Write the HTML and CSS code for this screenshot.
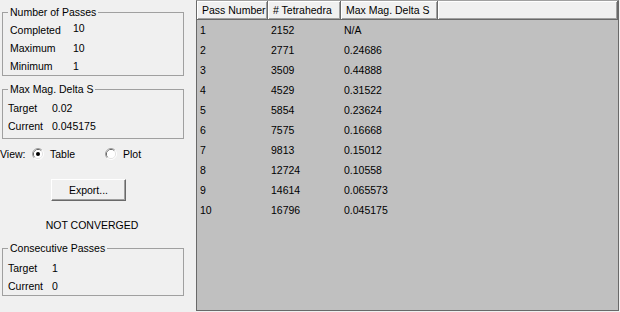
FILE: index.html
```html
<!DOCTYPE html>
<html lang="en">
  <head>
    <meta charset="UTF-8" />
    <title>Adaptive Passes</title>
    <link rel="stylesheet" href="styles.css">
  </head>
  <body>
    <div class="window">
      <div class="side">
        <fieldset class="group passes">
          <legend>Number of Passes</legend>
          <div class="fields wide">
            <span>Completed</span><span class="raised">10</span>
            <span>Maximum</span><span>10</span>
            <span>Minimum</span><span>1</span>
          </div>
        </fieldset>

        <fieldset class="group delta">
          <legend>Max Mag. Delta S</legend>
          <div class="fields">
            <span>Target</span><span>0.02</span>
            <span>Current</span><span>0.045175</span>
          </div>
        </fieldset>

        <div class="view">
          <span class="view-label">View:</span>
          <label class="option table-opt">
            <svg class="radio" width="12" height="12" viewBox="0 0 12 12">
              <path d="M2.11 9.89A5.5 5.5 0 0 1 9.89 2.11" fill="none" stroke="#a0a0a0" />
              <path d="M9.89 2.11A5.5 5.5 0 0 1 2.11 9.89" fill="none" stroke="#ffffff" />
              <path d="M2.82 9.18A4.5 4.5 0 0 1 9.18 2.82" fill="none" stroke="#696969" />
              <path d="M9.18 2.82A4.5 4.5 0 0 1 2.82 9.18" fill="none" stroke="#e3e3e3" />
              <circle cx="6" cy="6" r="4" fill="#fff" />
              <circle cx="6" cy="6" r="2" fill="#000" />
            </svg>
            Table
          </label>
          <label class="option">
            <svg class="radio" width="12" height="12" viewBox="0 0 12 12">
              <path d="M2.11 9.89A5.5 5.5 0 0 1 9.89 2.11" fill="none" stroke="#a0a0a0" />
              <path d="M9.89 2.11A5.5 5.5 0 0 1 2.11 9.89" fill="none" stroke="#ffffff" />
              <path d="M2.82 9.18A4.5 4.5 0 0 1 9.18 2.82" fill="none" stroke="#696969" />
              <path d="M9.18 2.82A4.5 4.5 0 0 1 2.82 9.18" fill="none" stroke="#e3e3e3" />
              <circle cx="6" cy="6" r="4" fill="#fff" />
            </svg>
            Plot
          </label>
        </div>

        <button class="export">Export...</button>

        <div class="status">NOT CONVERGED</div>

        <fieldset class="group consecutive">
          <legend>Consecutive Passes</legend>
          <div class="fields">
            <span>Target</span><span>1</span>
            <span>Current</span><span>0</span>
          </div>
        </fieldset>
      </div>

      <div class="grid-panel">
        <table>
          <colgroup>
            <col class="c1" /><col class="c2" /><col class="c3" /><col />
          </colgroup>
          <thead>
            <tr>
              <th>Pass Number</th>
              <th># Tetrahedra</th>
              <th>Max Mag. Delta S</th>
              <th></th>
            </tr>
          </thead>
          <tbody>
            <tr><td>1</td><td>2152</td><td>N/A</td><td></td></tr>
            <tr><td>2</td><td>2771</td><td>0.24686</td><td></td></tr>
            <tr><td>3</td><td>3509</td><td>0.44888</td><td></td></tr>
            <tr><td>4</td><td>4529</td><td>0.31522</td><td></td></tr>
            <tr><td>5</td><td>5854</td><td>0.23624</td><td></td></tr>
            <tr><td>6</td><td>7575</td><td>0.16668</td><td></td></tr>
            <tr><td>7</td><td>9813</td><td>0.15012</td><td></td></tr>
            <tr><td>8</td><td>12724</td><td>0.10558</td><td></td></tr>
            <tr><td>9</td><td>14614</td><td>0.065573</td><td></td></tr>
            <tr><td>10</td><td>16796</td><td>0.045175</td><td></td></tr>
          </tbody>
        </table>
      </div>
    </div>
  </body>
</html>
```

FILE: styles.css
```css
body {
  margin: 0;
  background-color: #f0f0f0;
  font-family: "Liberation Sans", Arial, sans-serif;
  font-size: 10.5px;
  color: #000;
}

.window {
  display: flex;
  height: 312px;
}

.side {
  width: 196px;
  flex: none;
}

/* group boxes */
.group {
  margin: 0 12px 0 2px;
  padding: 0;
  border: 1px solid #a0a0a0;
  min-inline-size: 0;
}

.group legend {
  padding: 0 2px;
  margin-left: 5px;
  line-height: 12px;
}

.fields {
  display: grid;
  grid-template-columns: 44px auto;
  line-height: 18px;
  padding-left: 5px;
}

.fields.wide {
  grid-template-columns: 63px auto;
  padding-left: 7px;
}

.raised {
  line-height: 14px;
  align-self: start;
}

.passes {
  margin-top: 6px;
}

.passes .fields {
  padding-top: 3px;
}

.delta {
  margin-top: 7px;
}

.delta .fields {
  padding-top: 4px;
  padding-bottom: 3px;
}

.consecutive {
  margin-top: 10px;
}

.consecutive .fields {
  padding-top: 5px;
}

/* view switch */
.view {
  display: flex;
  align-items: center;
  height: 16px;
  margin-top: 7px;
}

.view-label {
  width: 32px;
}

.option {
  display: flex;
  align-items: center;
  gap: 6px;
}

.table-opt {
  width: 73px;
}

.export {
  display: block;
  width: 75px;
  height: 22px;
  margin: 17px 0 0 51px;
  padding: 0;
  font: inherit;
  color: #000;
  background-color: #f0f0f0;
  border: 1px solid;
  border-color: #fff #696969 #696969 #fff;
  box-shadow: inset -1px -1px 0 #a0a0a0;
}

.status {
  width: 184px;
  margin-top: 17px;
  line-height: 14px;
  text-align: center;
}

/* results list */
.grid-panel {
  flex: none;
  width: 421px;
  height: 309px;
  border: 1px solid #696969;
  border-top-color: #a0a0a0;
  background-color: #c0c0c0;
}

table {
  width: 421px;
  table-layout: fixed;
  border-collapse: separate;
  border-spacing: 0;
}

.c1 {
  width: 71px;
}

.c2 {
  width: 73px;
}

.c3 {
  width: 97px;
}

th {
  padding: 0 0 0 5px;
  line-height: 18px;
  font-weight: normal;
  text-align: left;
  white-space: nowrap;
  background-color: #f0f0f0;
  border-right: 1px solid #696969;
  border-bottom: 1px solid #696969;
  box-shadow: inset 1px 1px 0 #fff, inset -1px -1px 0 #a0a0a0;
}

td {
  padding: 0 0 0 3px;
  line-height: 20px;
  white-space: nowrap;
}
```
